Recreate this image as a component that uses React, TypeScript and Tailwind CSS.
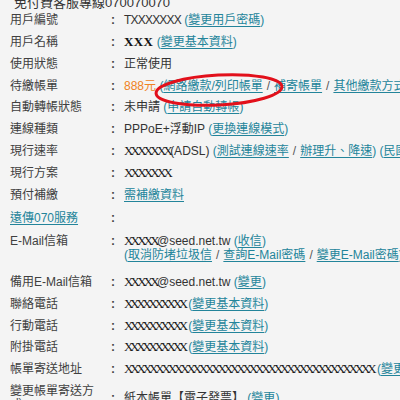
import type { ReactNode } from 'react';

const A = ({ children }: { children: ReactNode }) => (
  <span className="text-[#23849a] underline underline-offset-2 decoration-1">{children}</span>
);

const Paren = ({ children }: { children: ReactNode }) => (
  <span className="text-[#23849a]">({children})</span>
);

const Sep = () => <span className="text-[#555] px-[4px]">/</span>;

const X = ({ n, className = 'tracking-[-2.8px]' }: { n: number; className?: string }) => (
  <span className={`font-['Liberation_Serif',serif] text-[13px] text-[#1a1a1a] ${className}`}>
    {'X'.repeat(n)}
  </span>
);

function Row({
  label,
  children,
  h = 'h-[21.8px]',
  align = 'items-center',
  pad = '',
}: {
  label: ReactNode;
  children?: ReactNode;
  h?: string;
  align?: string;
  pad?: string;
}) {
  return (
    <div className={`flex ${align} ${h} ${pad}`}>
      <div className="w-[101px] pr-[11px] shrink-0 text-[#404040]">{label}</div>
      <div className="w-[13px] shrink-0 text-[#444] font-bold">:</div>
      <div className="flex-1 min-w-0 whitespace-nowrap text-[#333]">{children}</div>
    </div>
  );
}

export default function App() {
  return (
    <div className="relative w-[400px] h-[400px] overflow-hidden bg-[#f4f4f4] pt-[2px] font-['Liberation_Sans','Noto_Sans_CJK_TC',sans-serif] text-[12px] leading-[14px]">
      {/* header, cut off at the top */}
      <div className="h-[13.3px] pl-[14px]">
        <div className="-mt-[6px] text-[13px] leading-[14px] text-[#333] whitespace-nowrap">
          免付費客服專線070070070
        </div>
      </div>

      <div className="pl-[10px]">
        <Row label="用戶編號">
          <span className="tracking-[-0.8px]">TXXXXXXX</span>{' '}
          <Paren>
            <A>變更用戶密碼</A>
          </Paren>
        </Row>
        <Row label="用戶名稱">
          <span className="font-['Liberation_Serif',serif] font-bold text-[13px] tracking-[0.4px] text-[#111]">XXX</span>{' '}
          <Paren>
            <A>變更基本資料</A>
          </Paren>
        </Row>
        <Row label="使用狀態">正常使用</Row>
        <Row label="待繳帳單">
          <span className="text-[#f08223]">888元</span>{' '}
          <Paren>
            <A>網路繳款/列印帳單</A>
            <Sep />
            <A>補寄帳單</A>
            <Sep />
            <A>其他繳款方式</A>
          </Paren>
        </Row>
        <Row label="自動轉帳狀態">
          未申請{' '}
          <Paren>
            <A>申請自動轉帳</A>
          </Paren>
        </Row>
        <Row label="連線種類">
          PPPoE+浮動IP{' '}
          <Paren>
            <A>更換連線模式</A>
          </Paren>
        </Row>
        <Row label="現行速率">
          <X n={7} />
          (ADSL){' '}
          <Paren>
            <A>測試連線速率</A>
            <Sep />
            <A>辦理升、降速</A>
          </Paren>{' '}
          <Paren>
            <A>民國100年</A>
          </Paren>
        </Row>
        <Row label="現行方案">
          <X n={7} />
        </Row>
        <Row label="預付補繳">
          <A>需補繳資料</A>
        </Row>
        <Row label={<A>遠傳070服務</A>} h="h-[25px]" />
        <Row label="E-Mail信箱" h="h-[40.6px]" align="items-start" pad="pt-[4px]">
          <div>
            <X n={5} />
            @seed.net.tw{' '}
            <Paren>
              <A>收信</A>
            </Paren>
          </div>
          <div>
            <Paren>
              <A>取消防堵垃圾信</A>
              <Sep />
              <A>查詢E-Mail密碼</A>
              <Sep />
              <A>變更E-Mail密碼</A>
            </Paren>
          </div>
        </Row>
        <Row label="備用E-Mail信箱">
          <X n={5} />
          @seed.net.tw{' '}
          <Paren>
            <A>變更</A>
          </Paren>
        </Row>
        <Row label="聯絡電話">
          <X n={10} className="tracking-[-3.3px]" />{' '}
          <Paren>
            <A>變更基本資料</A>
          </Paren>
        </Row>
        <Row label="行動電話">
          <X n={10} className="tracking-[-3.3px]" />{' '}
          <Paren>
            <A>變更基本資料</A>
          </Paren>
        </Row>
        <Row label="附掛電話">
          <X n={10} className="tracking-[-3.3px]" />{' '}
          <Paren>
            <A>變更基本資料</A>
          </Paren>
        </Row>
        <Row label="帳單寄送地址">
          <X n={40} className="tracking-[-3.15px]" />{' '}
          <Paren>
            <A>變更基本資料</A>
          </Paren>
        </Row>
        <Row label="變更帳單寄送方式" h="" pad="pt-[4px] pb-[4px]">
          紙本帳單【電子發票】{' '}
          <Paren>
            <A>變更</A>
          </Paren>
        </Row>
      </div>

      {/* red hand-drawn annotation ring */}
      <svg className="absolute left-[150px] top-[69px]" width="140" height="42" viewBox="0 0 140 42">
        <ellipse
          cx="69"
          cy="21"
          rx="63"
          ry="15"
          fill="none"
          stroke="#e2101b"
          strokeWidth="3"
          transform="rotate(-3 69 21)"
        />
      </svg>
    </div>
  );
}
